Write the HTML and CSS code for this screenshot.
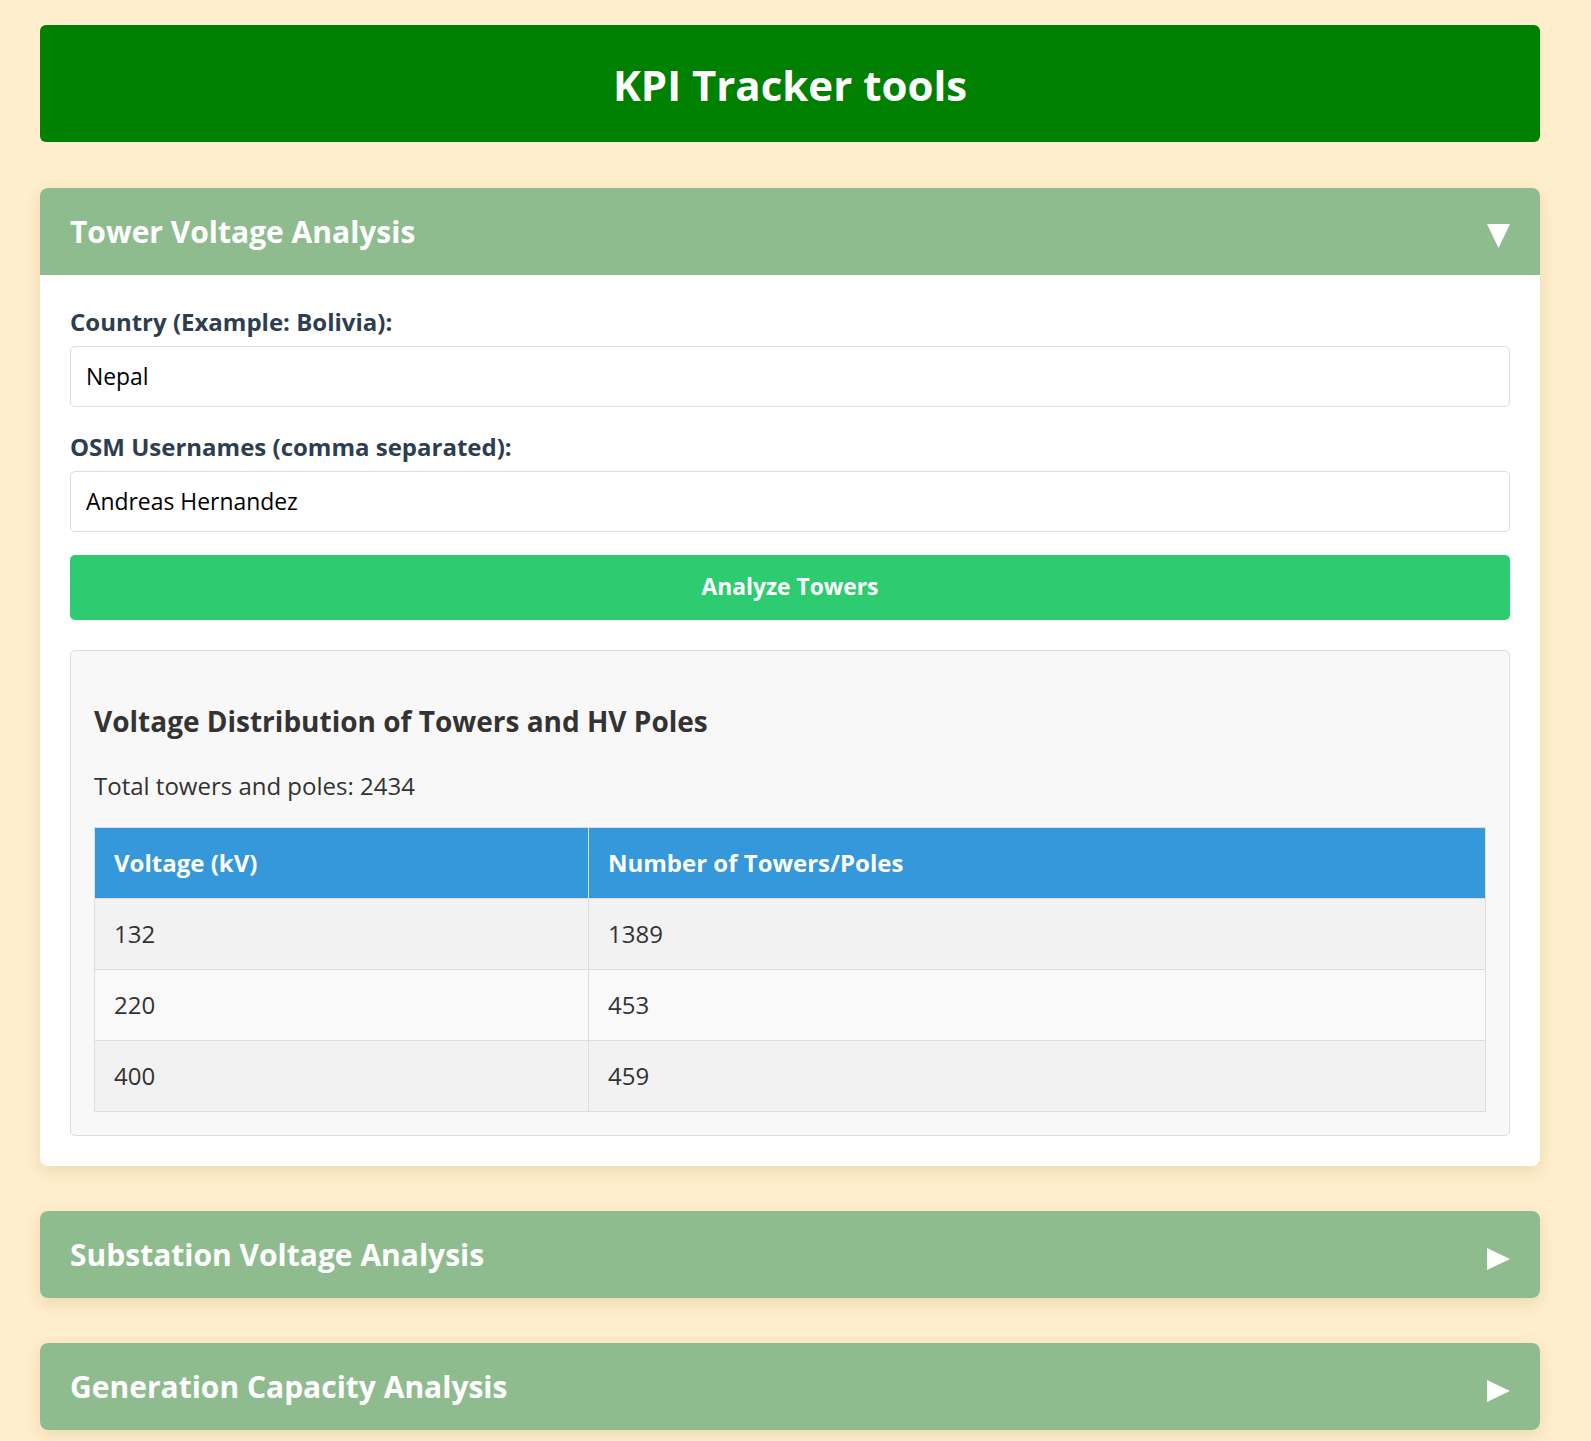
FILE: index.html
```html
<!DOCTYPE html>
<html lang="en">
<head>
<meta charset="utf-8">
<title>KPI Tracker tools</title>
<link rel="stylesheet" href="styles.css">
</head>
<body>
<div class="container">
  <header class="topbar">
    <h1>KPI Tracker tools</h1>
  </header>

  <section class="card">
    <div class="card-head">
      <h2>Tower Voltage Analysis</h2>
      <svg class="caret" width="23" height="24" viewBox="0 0 23 24"><polygon points="0,0 23,0 11.5,24" fill="#fff"/></svg>
    </div>
    <div class="card-body">
      <div class="field">
        <label for="country">Country (Example: Bolivia):</label>
        <input id="country" type="text" value="Nepal">
      </div>
      <div class="field">
        <label for="users">OSM Usernames (comma separated):</label>
        <input id="users" type="text" value="Andreas Hernandez">
      </div>
      <button class="btn" type="button">Analyze Towers</button>

      <div class="results">
        <h3>Voltage Distribution of Towers and HV Poles</h3>
        <p>Total towers and poles: 2434</p>
        <table>
          <colgroup><col class="col-volt"><col></colgroup>
          <thead>
            <tr><th>Voltage (kV)</th><th>Number of Towers/Poles</th></tr>
          </thead>
          <tbody>
            <tr><td>132</td><td>1389</td></tr>
            <tr><td>220</td><td>453</td></tr>
            <tr><td>400</td><td>459</td></tr>
          </tbody>
        </table>
      </div>
    </div>
  </section>

  <section class="card">
    <div class="card-head collapsed">
      <h2>Substation Voltage Analysis</h2>
      <svg class="caret" width="23" height="22" viewBox="0 0 23 22"><polygon points="0,0 23,11 0,22" fill="#fff"/></svg>
    </div>
  </section>

  <section class="card">
    <div class="card-head collapsed">
      <h2>Generation Capacity Analysis</h2>
      <svg class="caret" width="23" height="22" viewBox="0 0 23 22"><polygon points="0,0 23,11 0,22" fill="#fff"/></svg>
    </div>
  </section>
</div>
</body>
</html>
```

FILE: styles.css
```css
* { box-sizing: border-box; }

html, body {
  margin: 0;
  background: #ffeecc;
}

body {
  padding: 25px 40px;
  font-family: "Open Sans", "Noto Sans", sans-serif;
  color: #333;
  font-size: 24px;
}

.container {
  max-width: 1500px;
}

.topbar {
  background: #008000;
  border-radius: 6px;
  margin-bottom: 46px;
  padding: 33px 0 30px;
  text-align: center;
}

.topbar h1 {
  margin: 0;
  font-size: 42px;
  line-height: 54px;
  font-weight: 700;
  color: #fff;
}

.card {
  background: #fff;
  border-radius: 8px;
  box-shadow: 0 5px 16px rgba(120, 90, 20, 0.14);
  margin-bottom: 45px;
  overflow: hidden;
}

.card-head {
  background: #8fbc8f;
  display: flex;
  align-items: center;
  justify-content: space-between;
  padding: 24px 30px 24px;
}

.card-head h2 {
  margin: 0;
  font-size: 30px;
  font-weight: 700;
  line-height: 39px;
  color: #fff;
}

.caret {
  display: block;
  margin-top: 8px;
}

.card-body {
  padding: 30px;
}

.field {
  margin-bottom: 23px;
}

.field label {
  display: block;
  font-size: 24px;
  font-weight: 700;
  color: #2c3e50;
  margin-bottom: 8px;
  line-height: 33px;
}

.field input {
  display: block;
  width: 100%;
  height: 61px;
  padding: 0 15px 1px;
  border: 1px solid #ddd;
  border-radius: 5px;
  background: #fff;
  font-family: "Open Sans", "Noto Sans", sans-serif;
  font-size: 22.9px;
  color: #000;
}

.btn {
  display: block;
  width: 100%;
  height: 65px;
  padding: 0 0 3px;
  border: none;
  border-radius: 5px;
  background: #2ecc71;
  color: #fff;
  font-family: "Open Sans", "Noto Sans", sans-serif;
  font-size: 22.8px;
  font-weight: 700;
  margin-bottom: 30px;
}

.results {
  background: #f8f8f8;
  border: 1px solid #ddd;
  border-radius: 5px;
  padding: 23px;
}

.results h3 {
  margin: 30px 0 0;
  font-size: 28px;
  font-weight: 700;
  line-height: 35px;
  color: #333;
}

.results p {
  margin: 30px 0 25px;
  font-size: 24px;
  line-height: 33px;
  color: #333;
}

table {
  width: 100%;
  border-collapse: collapse;
  font-size: 24px;
}

.col-volt { width: 494px; }

th, td {
  border: 1px solid #ddd;
  padding: 18px 19px;
  line-height: 34px;
  text-align: left;
}

th {
  background: #3498db;
  color: #fff;
  font-weight: 700;
}

tbody tr:nth-child(odd) td { background: #f2f2f2; }
tbody tr:nth-child(even) td { background: #f9f9f9; }
```
